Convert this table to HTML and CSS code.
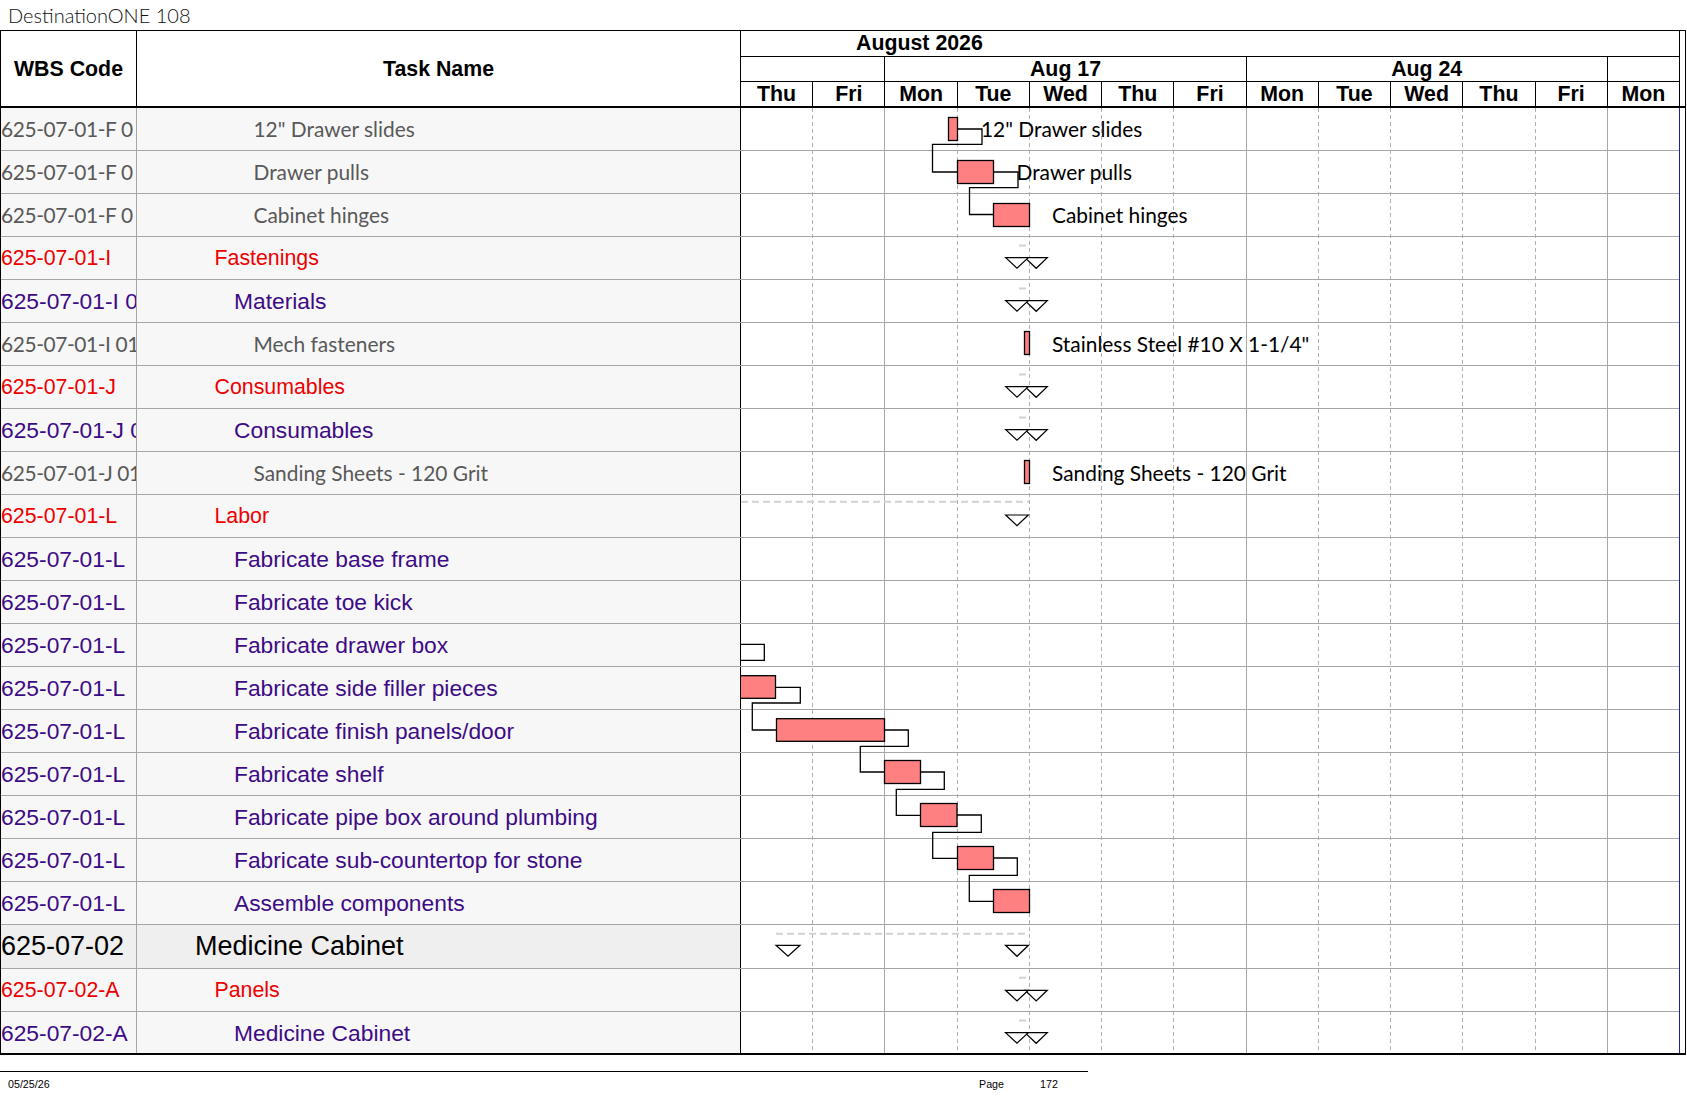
FILE: index.html
```html
<!DOCTYPE html>
<html lang="en">
<head>
<meta charset="utf-8">
<title>DestinationONE 108</title>
<link rel="stylesheet" href="styles.css">
</head>
<body>
<div class="title">DestinationONE 108</div>
<div class="chart">
  <div class="head">
    <div class="hcell wbs">WBS Code</div>
    <div class="hcell task">Task Name</div>
    <div class="scale">
      <div class="month">August 2026</div>
      <div class="week w2"></div>
      <div class="week w5">Aug 17</div>
      <div class="week w5">Aug 24</div>
      <div class="week w1"></div>
      <div class="day">Thu</div>
      <div class="day">Fri</div>
      <div class="day">Mon</div>
      <div class="day">Tue</div>
      <div class="day">Wed</div>
      <div class="day">Thu</div>
      <div class="day">Fri</div>
      <div class="day">Mon</div>
      <div class="day">Tue</div>
      <div class="day">Wed</div>
      <div class="day">Thu</div>
      <div class="day">Fri</div>
      <div class="day">Mon</div>
    </div>
    <div class="hpad"></div>
  </div>
  <div class="body">
    <div class="table">
      <div class="row gry"><div class="c code">625-07-01-F 0</div><div class="c name">12" Drawer slides</div></div>
      <div class="row gry"><div class="c code">625-07-01-F 0</div><div class="c name">Drawer pulls</div></div>
      <div class="row gry"><div class="c code">625-07-01-F 0</div><div class="c name">Cabinet hinges</div></div>
      <div class="row red"><div class="c code">625-07-01-I</div><div class="c name">Fastenings</div></div>
      <div class="row pur"><div class="c code">625-07-01-I 01</div><div class="c name">Materials</div></div>
      <div class="row gry"><div class="c code">625-07-01-I 01</div><div class="c name">Mech fasteners</div></div>
      <div class="row red"><div class="c code">625-07-01-J</div><div class="c name">Consumables</div></div>
      <div class="row pur"><div class="c code">625-07-01-J 01</div><div class="c name">Consumables</div></div>
      <div class="row gry"><div class="c code">625-07-01-J 01</div><div class="c name">Sanding Sheets - 120 Grit</div></div>
      <div class="row red"><div class="c code">625-07-01-L</div><div class="c name">Labor</div></div>
      <div class="row pur"><div class="c code">625-07-01-L</div><div class="c name">Fabricate base frame</div></div>
      <div class="row pur"><div class="c code">625-07-01-L</div><div class="c name">Fabricate toe kick</div></div>
      <div class="row pur"><div class="c code">625-07-01-L</div><div class="c name">Fabricate drawer box</div></div>
      <div class="row pur"><div class="c code">625-07-01-L</div><div class="c name">Fabricate side filler pieces</div></div>
      <div class="row pur"><div class="c code">625-07-01-L</div><div class="c name">Fabricate finish panels/door</div></div>
      <div class="row pur"><div class="c code">625-07-01-L</div><div class="c name">Fabricate shelf</div></div>
      <div class="row pur"><div class="c code">625-07-01-L</div><div class="c name">Fabricate pipe box around plumbing</div></div>
      <div class="row pur"><div class="c code">625-07-01-L</div><div class="c name">Fabricate sub-countertop for stone</div></div>
      <div class="row pur"><div class="c code">625-07-01-L</div><div class="c name">Assemble components</div></div>
      <div class="row top tall"><div class="c code">625-07-02</div><div class="c name">Medicine Cabinet</div></div>
      <div class="row red"><div class="c code">625-07-02-A</div><div class="c name">Panels</div></div>
      <div class="row pur last"><div class="c code">625-07-02-A</div><div class="c name">Medicine Cabinet</div></div>
    </div>
    <svg class="gantt" width="939" height="945" viewBox="0 0 939 945" xmlns="http://www.w3.org/2000/svg">
      <g class="vdash">
        <line x1="71.5" y1="0" x2="71.5" y2="945"/>
        <line x1="216.5" y1="0" x2="216.5" y2="945"/>
        <line x1="288.5" y1="0" x2="288.5" y2="945"/>
        <line x1="360.5" y1="0" x2="360.5" y2="945"/>
        <line x1="432.5" y1="0" x2="432.5" y2="945"/>
        <line x1="577.5" y1="0" x2="577.5" y2="945"/>
        <line x1="649.5" y1="0" x2="649.5" y2="945"/>
        <line x1="721.5" y1="0" x2="721.5" y2="945"/>
        <line x1="794.5" y1="0" x2="794.5" y2="945"/>
      </g>
      <g class="vsolid">
        <line x1="143.5" y1="0" x2="143.5" y2="945"/>
        <line x1="505.5" y1="0" x2="505.5" y2="945"/>
        <line x1="866.5" y1="0" x2="866.5" y2="945"/>
      </g>
      <line class="vblue" x1="938.5" y1="0" x2="938.5" y2="945"/>
      <g class="hline">
        <line x1="0" y1="42.5" x2="938" y2="42.5"/>
        <line x1="0" y1="85.5" x2="938" y2="85.5"/>
        <line x1="0" y1="128.5" x2="938" y2="128.5"/>
        <line x1="0" y1="171.5" x2="938" y2="171.5"/>
        <line x1="0" y1="214.5" x2="938" y2="214.5"/>
        <line x1="0" y1="257.5" x2="938" y2="257.5"/>
        <line x1="0" y1="300.5" x2="938" y2="300.5"/>
        <line x1="0" y1="343.5" x2="938" y2="343.5"/>
        <line x1="0" y1="386.5" x2="938" y2="386.5"/>
        <line x1="0" y1="429.5" x2="938" y2="429.5"/>
        <line x1="0" y1="472.5" x2="938" y2="472.5"/>
        <line x1="0" y1="515.5" x2="938" y2="515.5"/>
        <line x1="0" y1="558.5" x2="938" y2="558.5"/>
        <line x1="0" y1="601.5" x2="938" y2="601.5"/>
        <line x1="0" y1="644.5" x2="938" y2="644.5"/>
        <line x1="0" y1="687.5" x2="938" y2="687.5"/>
        <line x1="0" y1="730.5" x2="938" y2="730.5"/>
        <line x1="0" y1="773.5" x2="938" y2="773.5"/>
        <line x1="0" y1="816.5" x2="938" y2="816.5"/>
        <line x1="0" y1="860.5" x2="938" y2="860.5"/>
        <line x1="0" y1="903.5" x2="938" y2="903.5"/>
      </g>
      <g transform="translate(0,-1)">
        <g class="sumdash">
          <line x1="0" y1="394.7" x2="288" y2="394.7"/>
          <line x1="35" y1="826.7" x2="285.7" y2="826.7"/>
          <line x1="278" y1="138.5" x2="288" y2="138.5"/>
          <line x1="278" y1="181.5" x2="288" y2="181.5"/>
          <line x1="278" y1="267.5" x2="288" y2="267.5"/>
          <line x1="278" y1="310.5" x2="288" y2="310.5"/>
          <line x1="278" y1="870.7" x2="288" y2="870.7"/>
          <line x1="278" y1="913.5" x2="288" y2="913.5"/>
        </g>
        <g class="link">
          <polyline points="216.5,22 241,22 241,37.3 191.5,37.3 191.5,65 216.5,65"/>
          <polyline points="252.5,65 277,65 277,80.7 228.5,80.7 228.5,107.5 252.5,107.5"/>
          <polyline points="-2,537.3 23.3,537.3 23.3,553.3 -2,553.3"/>
          <polyline points="34.5,580.3 59.3,580.3 59.3,596 11.3,596 11.3,623 35.5,623"/>
          <polyline points="143.5,623 167.3,623 167.3,639.3 119.3,639.3 119.3,665 143.5,665"/>
          <polyline points="179.5,665 203.3,665 203.3,682.3 155.3,682.3 155.3,708.3 179.5,708.3"/>
          <polyline points="216,708 240.3,708 240.3,725.3 191.7,725.3 191.7,751.3 216.5,751.3"/>
          <polyline points="252.5,751 276.3,751 276.3,768.3 228.3,768.3 228.3,794.3 252.5,794.3"/>
        </g>
        <g class="bar">
          <rect x="207.5" y="10.5" width="9" height="23"/>
          <rect x="216.5" y="53.5" width="36" height="23"/>
          <rect x="252.5" y="96.5" width="36" height="23"/>
          <rect x="283.5" y="224.5" width="5" height="23"/>
          <rect x="283.5" y="353.5" width="5" height="23"/>
          <rect x="-2" y="568.7" width="36.5" height="22.6"/>
          <rect x="35.5" y="611.7" width="108" height="22.6"/>
          <rect x="143.5" y="653.5" width="36" height="23"/>
          <rect x="179.5" y="696.5" width="36.5" height="23"/>
          <rect x="216.5" y="739.5" width="36" height="23"/>
          <rect x="252.5" y="782.5" width="36" height="23"/>
        </g>
        <g class="ms">
          <polygon points="284,150.7 306.3,150.7 295.2,161.3"/>
          <polygon points="264.7,150.7 287.3,150.7 276,161.3"/>
          <polygon points="284,193.7 306.3,193.7 295.2,204.3"/>
          <polygon points="264.7,193.7 287.3,193.7 276,204.3"/>
          <polygon points="284,279.7 306.3,279.7 295.2,290.3"/>
          <polygon points="264.7,279.7 287.3,279.7 276,290.3"/>
          <polygon points="284,322.7 306.3,322.7 295.2,333.3"/>
          <polygon points="264.7,322.7 287.3,322.7 276,333.3"/>
          <polygon points="264.7,408 287.3,408 276,418.6"/>
          <polygon points="35,838.3 59,838.3 47,849.3"/>
          <polygon points="264.5,838.3 287.5,838.3 276,849.3"/>
          <polygon points="284,883.3 306.3,883.3 295.2,893.9"/>
          <polygon points="264.5,883.3 287.3,883.3 276,893.9"/>
          <polygon points="284,925.7 306.3,925.7 295.2,936.3"/>
          <polygon points="264.5,925.7 287.3,925.7 276,936.3"/>
        </g>
        <g class="lbl">
          <text x="240" y="30.3">12" Drawer slides</text>
          <text x="275.5" y="73.3">Drawer pulls</text>
          <text x="311" y="116.3">Cabinet hinges</text>
          <text x="311" y="245.3">Stainless Steel #10 X 1-1/4"</text>
          <text x="311" y="374.3">Sanding Sheets - 120 Grit</text>
        </g>
      </g>
    </svg>
    <div class="bpad"></div>
  </div>
</div>
<div class="footer">
  <div class="fdate">05/25/26</div>
  <div class="fpage">Page</div>
  <div class="fnum">172</div>
</div>
</body>
</html>
```

FILE: styles.css
```css
* { box-sizing: border-box; }
html, body { margin: 0; padding: 0; background: #fff; }
body {
  width: 1687px;
  font-family: "Liberation Sans", Arial, sans-serif;
  color: #000;
}
.title {
  height: 30px;
  line-height: 30px;
  padding-left: 8px;
  font-family: Lato, "DejaVu Sans", sans-serif;
  font-weight: 300;
  font-size: 20px;
  color: #111;
  white-space: nowrap;
}
.chart {
  width: 1686px;
  border: 1px solid #000;
  border-bottom: 2px solid #000;
}
.head {
  display: grid;
  grid-template-columns: 136px 604px 939px 5px;
  height: 77px;
  border-bottom: 2px solid #000;
}
.hcell {
  display: flex;
  align-items: center;
  justify-content: center;
  font-weight: bold;
  font-size: 21.33px;
  border-right: 1px solid #000;
  padding-top: 1px;
}
.scale {
  display: grid;
  grid-template-columns: repeat(13, 1fr);
  grid-template-rows: 26px 25px 24px;
  font-weight: bold;
  font-size: 21.33px;
}
.month {
  grid-column: 1 / -1;
  border-bottom: 1px solid #000;
  border-right: 1px solid #000;
  padding-left: 115px;
  line-height: 25px;
  white-space: nowrap;
}
.week {
  border-bottom: 1px solid #000;
  border-right: 1px solid #000;
  text-align: center;
  line-height: 24px;
  white-space: nowrap;
}
.w1 { grid-column: span 1; }
.w2 { grid-column: span 2; }
.w5 { grid-column: span 5; }
.day {
  border-right: 1px solid #000;
  text-align: center;
  line-height: 24px;
  white-space: nowrap;
}
.body {
  display: grid;
  grid-template-columns: 740px 939px 5px;
}
.row {
  display: grid;
  grid-template-columns: 136px 604px;
  height: 43px;
  border-bottom: 1px solid #a6a6a6;
  background: #f7f7f7;
}
.row.tall { height: 44px; background: #efefef; }
.row.last { height: 41px; border-bottom: 0; }
.c {
  overflow: hidden;
  white-space: nowrap;
  line-height: 42px;
}
.row.tall .c { line-height: 43px; }
.row.last .c { line-height: 42px; }
.code { border-right: 1px solid #a6a6a6; padding-left: 0; }
.name { border-right: 1px solid #000; }

.row.gry .c {
  font-family: Lato, "Open Sans", sans-serif;
  font-size: 20.9px;
  color: #595959;
}
.row.gry .code { letter-spacing: -0.4px; }
.row.gry .name { padding-left: 116.5px; }
.row.red .c { font-size: 21.33px; color: #ee0000; }
.row.red .name { padding-left: 77.5px; }
.row.pur .c { font-size: 22.8px; color: #3d0b85; }
.row.pur .name { padding-left: 97px; }
.row.top .c { font-size: 27px; color: #000; }
.row.top .name { padding-left: 58px; }

.gantt { display: block; background: #fff; }
.vdash line { stroke: #b0b0b0; stroke-width: 1; stroke-dasharray: 4 3; }
.vsolid line { stroke: #a6a6a6; stroke-width: 1; }
.vblue { stroke: #1f1fa0; stroke-width: 1; }
.hline line { stroke: #a6a6a6; stroke-width: 1; }
.sumdash line { stroke: #d2d2d2; stroke-width: 2; stroke-dasharray: 7 4; }
.link polyline { fill: none; stroke: #000; stroke-width: 1.3; }
.bar rect { fill: #ff8080; stroke: #000; stroke-width: 1.3; }
.ms polygon { fill: #fff; stroke: #000; stroke-width: 1.2; }
.lbl text {
  font-family: Lato, "Open Sans", sans-serif;
  font-size: 20.9px;
  fill: #000;
}
.bpad { background: #fff; }

.footer {
  width: 1088px;
  margin-top: 16px;
  border-top: 1px solid #000;
  display: grid;
  grid-template-columns: 979px 61px auto;
  padding-top: 5px;
  font-size: 10.7px;
  line-height: 14px;
  color: #000;
}
.fdate { padding-left: 8px; }
```
